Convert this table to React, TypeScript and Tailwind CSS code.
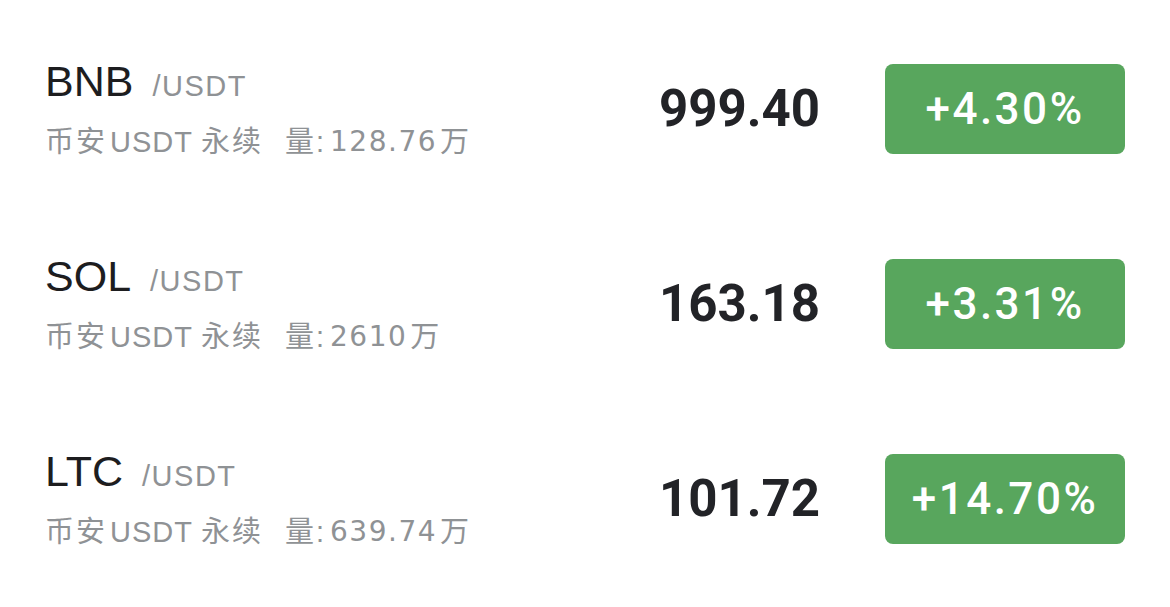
import React from 'react';

interface Ticker {
  symbol: string;
  volume: string;
  price: string;
  change: string;
}

const tickers: Ticker[] = [
  { symbol: 'BNB', volume: '128.76', price: '999.40', change: '+4.30%' },
  { symbol: 'SOL', volume: '2610', price: '163.18', change: '+3.31%' },
  { symbol: 'LTC', volume: '639.74', price: '101.72', change: '+14.70%' },
];

const sans = "font-['Liberation_Sans','Noto_Sans_CJK_SC',sans-serif]";
const roboto = "font-['Roboto','Liberation_Sans',sans-serif]";

const TickerRow: React.FC<{ t: Ticker }> = ({ t }) => (
  <div className="h-[195px] flex items-center pl-[45px] pr-[45px]">
    <div className={`flex-1 flex flex-col ${sans}`}>
      <div className="flex items-baseline h-[48px] leading-[48px]">
        <span className="text-[43px] text-[#1d1d1f]">{t.symbol}</span>
        <span className="ml-[19px] text-[29px] tracking-[1.5px] text-[#8f9295]">/USDT</span>
      </div>
      <div className="mt-[19px] h-[36px] leading-[36px] text-[29px] text-[#8f9295] whitespace-nowrap flex">
        <span className="tracking-[2px]">币安</span>
        <span className="ml-[3px] tracking-[1px]">USDT</span>
        <span className="ml-[8px] tracking-[2px]">永续</span>
        <span className="ml-[22px] tracking-[2px]">量:</span>
        <span className="ml-[4px] text-[28px] tracking-[1.5px] font-['DejaVu_Sans',sans-serif]">{t.volume}</span>
        <span className="ml-[3px]">万</span>
      </div>
    </div>
    <div className={`${roboto} font-bold text-[51px] text-[#222327] leading-none`}>{t.price}</div>
    <div className={`ml-[65px] w-[240px] h-[90px] rounded-[8px] bg-[#58a65d] flex items-center justify-center ${roboto} font-medium text-[44px] tracking-[2.5px] text-white leading-none`}>
      {t.change}
    </div>
  </div>
);

export default function App() {
  return (
    <div className="w-[1170px] h-[607px] bg-white pt-[11px] overflow-hidden">
      {tickers.map((t) => (
        <TickerRow key={t.symbol} t={t} />
      ))}
    </div>
  );
}
